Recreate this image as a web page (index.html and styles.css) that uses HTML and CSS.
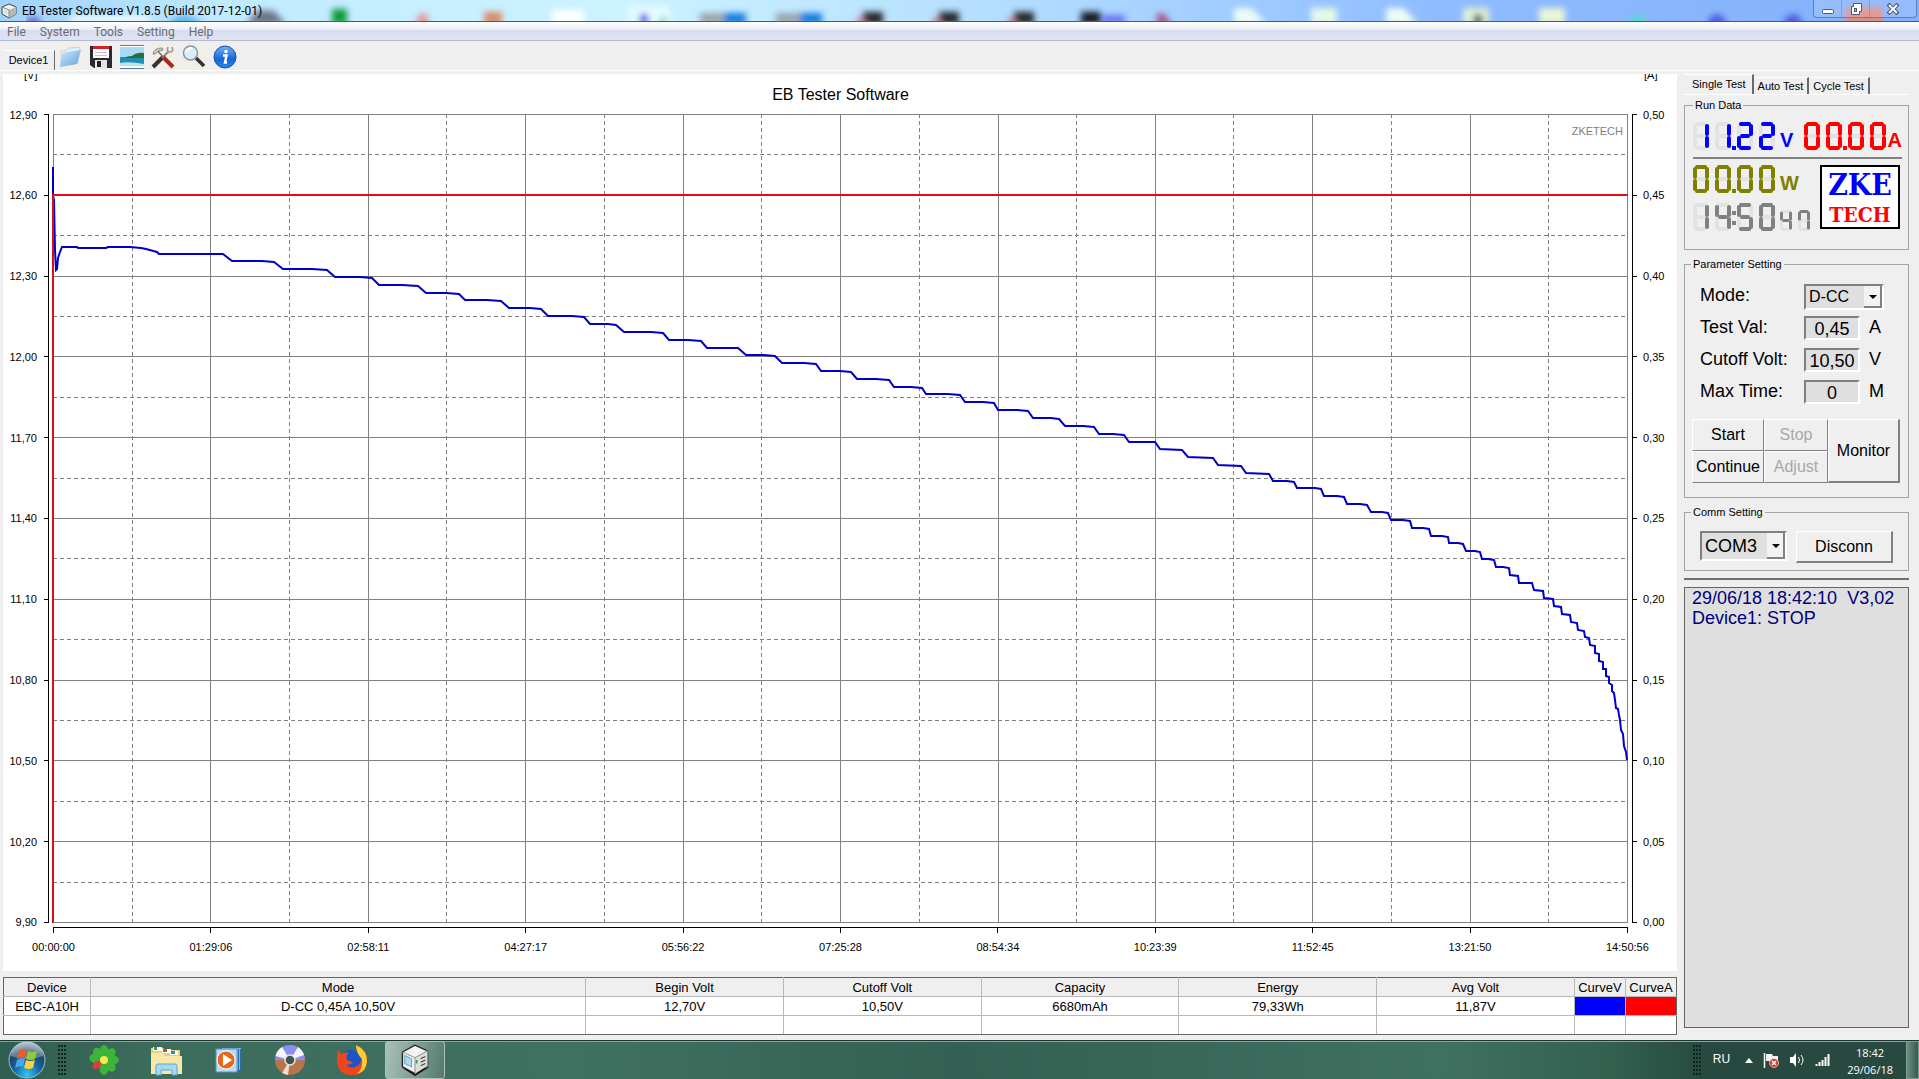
FILE: index.html
```html
<!DOCTYPE html>
<html lang="en">
<head>
<meta charset="utf-8">
<title>EB Tester Software V1.8.5 (Build 2017-12-01)</title>
<link rel="stylesheet" href="styles.css">
</head>
<body>
<svg class="defs" aria-hidden="true">
  <defs>
    <g id="seg-a"><line x1="4" y1="2" x2="12" y2="2"/></g>
    <g id="seg-b"><line x1="14" y1="4" x2="14" y2="12"/></g>
    <g id="seg-c"><line x1="14" y1="16" x2="14" y2="24"/></g>
    <g id="seg-d"><line x1="4" y1="26" x2="12" y2="26"/></g>
    <g id="seg-e"><line x1="2" y1="16" x2="2" y2="24"/></g>
    <g id="seg-f"><line x1="2" y1="4" x2="2" y2="12"/></g>
    <g id="seg-g"><line x1="5" y1="14" x2="11" y2="14"/></g>
    <g id="dim"><use href="#seg-a"/><use href="#seg-b"/><use href="#seg-c"/><use href="#seg-d"/><use href="#seg-e"/><use href="#seg-f"/><use href="#seg-g"/></g>
    <g id="n0"><use href="#seg-a"/><use href="#seg-b"/><use href="#seg-c"/><use href="#seg-d"/><use href="#seg-e"/><use href="#seg-f"/></g>
    <g id="n1"><use href="#seg-b"/><use href="#seg-c"/></g>
    <g id="n2"><use href="#seg-a"/><use href="#seg-b"/><use href="#seg-g"/><use href="#seg-e"/><use href="#seg-d"/></g>
    <g id="n4"><use href="#seg-f"/><use href="#seg-g"/><use href="#seg-b"/><use href="#seg-c"/></g>
    <g id="n5"><use href="#seg-a"/><use href="#seg-f"/><use href="#seg-g"/><use href="#seg-c"/><use href="#seg-d"/></g>
    <g id="n7"><use href="#seg-f"/><use href="#seg-a"/><use href="#seg-b"/><use href="#seg-c"/></g>
    <g id="box-icon">
      <path d="M2 7 L13 1 L24 6 L24 19 L13 26 L2 20 Z" fill="#f4f4f2" stroke="#222" stroke-width="1.2"/>
      <path d="M13 12 L24 6 V19 L13 26 Z" fill="#dcdcd8"/>
      <path d="M2 7 L13 12 L24 6 M13 12 V26" fill="none" stroke="#999"/>
      <path d="M4 10 L10 13 V20 L4 17 Z" fill="#a9dcf0" stroke="#7ab"/>
      <path d="M18 13 l4 -2 M18 16 l4 -2 M18 19 l4 -2" stroke="#444"/>
      <path d="M14.500 14 v3" stroke="#3aa03a" stroke-width="1.500"/>
    </g>
  </defs>
</svg>

<header class="titlebar">
  <svg class="glass" viewBox="0 0 1919 21" preserveAspectRatio="none" aria-hidden="true">
    <g filter="url(#soft)">
      <rect x="26" y="18" width="14" height="6" fill="#5a55c8"/>
      <rect x="70" y="16" width="80" height="8" fill="#f4fcff"/>
      <path d="M168 24 q12 -16 36 0z" fill="#4aa8ee"/>
      <path d="M246 24 L258 10 L274 11 L286 24z" fill="#6b7688"/>
      <rect x="332" y="9" width="15" height="15" fill="#0f9a3c"/>
      <path d="M414 24 l6 -10 h6 l4 10z" fill="#ec8b95"/>
      <rect x="484" y="12" width="18" height="12" fill="#d98a68"/>
      <rect x="552" y="10" width="32" height="14" fill="#fff"/>
      <rect x="628" y="6" width="42" height="18" fill="#e4fbff"/>
      <rect x="640" y="14" width="8" height="10" fill="#3e3edc"/><circle cx="663" cy="21" r="3" fill="#2cab6a"/>
      <rect x="700" y="13" width="24" height="11" fill="#9aa6ac"/><rect x="724" y="13" width="22" height="11" fill="#167ae0"/>
      <rect x="776" y="13" width="24" height="11" fill="#9aa6ac"/><rect x="800" y="13" width="22" height="11" fill="#167ae0"/>
      <rect x="863" y="12" width="20" height="12" fill="#22252b"/><rect x="857" y="18" width="8" height="6" fill="#c06c74"/>
      <rect x="939" y="12" width="20" height="12" fill="#22252b"/><rect x="933" y="18" width="8" height="6" fill="#c06c74"/>
      <rect x="1014" y="12" width="20" height="12" fill="#22252b"/><rect x="1008" y="18" width="8" height="6" fill="#c06c74"/>
      <rect x="1081" y="12" width="20" height="12" fill="#15171b"/><rect x="1103" y="15" width="22" height="9" fill="#6b74ee"/>
      <path d="M1156 24 l2 -11 l6 1 l8 10z" fill="#a5507a"/>
      <path d="M1234 24 V8 h18 l14 16z" fill="#eafcf4"/>
      <path d="M1311 24 V8 h26 v16z" fill="#e6f8e6"/>
      <path d="M1386 24 V8 h18 l14 16z" fill="#effcf2"/>
      <path d="M1463 24 V8 h26 v16z" fill="#e2f2d6"/><circle cx="1478" cy="19" r="5" fill="#4d5238"/>
      <path d="M1539 24 V8 h26 v16z" fill="#eaf6d6"/>
      <circle cx="1638" cy="22" r="8" fill="#62d2d4"/>
      <circle cx="1717" cy="23" r="9" fill="#4f5fe0"/><circle cx="1793" cy="23" r="9" fill="#4f5fe0"/>
      <rect x="1846" y="8" width="38" height="16" fill="#e08a80"/>
    </g>
    <defs><filter id="soft" x="0" y="-1" width="1" height="3"><feGaussianBlur stdDeviation="3"/></filter></defs>
  </svg>
  <svg class="app-icon" viewBox="0 0 16 16" aria-hidden="true">
    <path d="M1 4 L8 1 L15 4 V11 L8 15 L1 11z" fill="#f2f2ee" stroke="#444"/><path d="M8 7 L15 4 V11 L8 15z" fill="#b9b9b2"/><path d="M1 4 L8 7 V15" fill="none" stroke="#888"/><path d="M3 6.500 l3 1.500 v4 l-3 -1.500z" fill="#c8e2ea"/>
  </svg>
  <h1 class="title">EB Tester Software V1.8.5 (Build 2017-12-01)</h1>
  <div class="window-buttons">
    <button type="button" aria-label="Minimize"><svg width="14" height="12" viewBox="0 0 14 12"><rect x="1.500" y="6.500" width="11" height="4" rx="1" fill="#fff" stroke="#4c5870"/></svg></button>
    <button type="button" aria-label="Restore"><svg width="14" height="12" viewBox="0 0 14 12"><path d="M4.500 .500 h8 v8 h-2 v3 h-8 v-8 h2z" fill="#fff" stroke="#4c5870"/><rect x="5.500" y="5.500" width="2" height="3" fill="#9fb4dc" stroke="#4c5870"/></svg></button>
    <button type="button" class="close" aria-label="Close"><svg width="14" height="12" viewBox="0 0 14 12"><path d="M2 1 L12 11 M12 1 L2 11" stroke="#4c5870" stroke-width="4"/><path d="M3 2 L11 10 M11 2 L3 10" stroke="#fff" stroke-width="2"/></svg></button>
  </div>
</header>

<nav class="menubar">
  <button type="button">File</button><button type="button">System</button><button type="button">Tools</button><button type="button">Setting</button><button type="button">Help</button>
</nav>

<div class="toolbar">
  <button type="button" class="device-tab">Device1</button>
  <div class="tools">
    <button type="button" aria-label="Open"><svg viewBox="0 0 24 24"><rect width="24" height="24" fill="#f3efe4"/><path d="M3 6 L9 5 L11 3 L22 2 L20 18 L3 21z" fill="#dfeefa" stroke="#a8c6de" stroke-width=".6"/><path d="M4 8 L23 5 L19 19 L2 22z" fill="url(#fold)"/><defs><linearGradient id="fold" x2="1" y2="1"><stop stop-color="#cfe7fb"/><stop offset="1" stop-color="#5fa3d8"/></linearGradient></defs></svg></button>
    <button type="button" aria-label="Save"><svg viewBox="0 0 24 24"><path d="M1 1 H23 V23 H5 L1 20z" fill="#2c2a30"/><rect x="4" y="1" width="16" height="12" fill="#fff"/><rect x="4" y="1" width="16" height="3" fill="#dd1c2a"/><path d="M6 7.500 h12 M6 10.500 h12" stroke="#c4c4c8"/><rect x="6" y="15" width="12" height="8" fill="#e4e4e6"/><rect x="8" y="16" width="4" height="6" fill="#222"/></svg></button>
    <button type="button" aria-label="Picture"><svg viewBox="0 0 24 24"><rect width="24" height="24" fill="#fff"/><rect y="2" width="24" height="10" fill="#a9dcf2"/><rect y="12" width="24" height="7" fill="#218fb5"/><path d="M6 12 q3 -1 6 -1 q5 -4 12 -3 v5 H6z" fill="#2c6b3a"/><path d="M0 18 q8 -2 24 1 v2 H0z" fill="#bfe2e4"/><path d="M0 .500 h24 M0 23.500 h24" stroke="#5577a0"/></svg></button>
    <button type="button" aria-label="Tools"><svg viewBox="0 0 24 24"><rect width="24" height="24" fill="#f3efe4"/><path d="M2 22 L12 12" stroke="#3a3030" stroke-width="4"/><path d="M11 13 L18 6" stroke="#8b8b8b" stroke-width="2"/><path d="M21 2 q2 5 -2 5 q-4 0 -2 -5" fill="none" stroke="#999" stroke-width="1.600"/><path d="M12 12 L22 22" stroke="#a32a20" stroke-width="4"/><path d="M13 13 L6 5" stroke="#777" stroke-width="1.600"/><path d="M2 9 q1 -6 9 -6 l1 2 q-5 0 -8 4z" fill="#ccc" stroke="#666" stroke-width=".7"/></svg></button>
    <button type="button" aria-label="Search"><svg viewBox="0 0 24 24"><rect width="24" height="24" fill="#f3efe4"/><path d="M14 13 L22 21" stroke="#333" stroke-width="3.500"/><circle cx="8.500" cy="8" r="7" fill="#dcedf8" stroke="#8797a8" stroke-width="1.500"/><path d="M4 7 q2 -4 6 -4" stroke="#fff" stroke-width="2" fill="none"/></svg></button>
    <button type="button" aria-label="About"><svg viewBox="0 0 24 24"><circle cx="12" cy="12" r="11" fill="url(#info)" stroke="#1650a8"/><defs><linearGradient id="info" x2="0" y2="1"><stop stop-color="#6db1f8"/><stop offset=".6" stop-color="#1667d8"/><stop offset="1" stop-color="#2f86ee"/></linearGradient></defs><circle cx="13" cy="6.500" r="1.800" fill="#fff"/><path d="M10 10.500 h3.500 l-1.500 7 h2" fill="none" stroke="#fff" stroke-width="2.400"/></svg></button>
  </div>
</div>

<main class="workspace">
  <section class="results">
    <div class="chart">
      <span class="unit unit-v">[V]</span>
      <h2 class="chart-title">EB Tester Software</h2>
      <span class="unit unit-a">[A]</span>
      <ul class="axis axis-v"><li>12,90</li><li>12,60</li><li>12,30</li><li>12,00</li><li>11,70</li><li>11,40</li><li>11,10</li><li>10,80</li><li>10,50</li><li>10,20</li><li>9,90</li></ul>
      <div class="plot">
        <svg viewBox="53 114 1575 809" preserveAspectRatio="none" role="img" aria-label="Voltage and current over time">
          <g class="minor">
            <path d="M53 154.500H1628M53 235.500H1628M53 316.500H1628M53 397.500H1628M53 478.500H1628M53 558.500H1628M53 639.500H1628M53 720.500H1628M53 801.500H1628M53 882.500H1628"/>
            <path d="M132.500 114V923M289.500 114V923M446.500 114V923M604.500 114V923M761.500 114V923M919.500 114V923M1076.500 114V923M1233.500 114V923M1391.500 114V923M1548.500 114V923"/>
          </g>
          <g class="major">
            <path d="M53 114.500H1628M53 195.500H1628M53 276.500H1628M53 356.500H1628M53 437.500H1628M53 518.500H1628M53 599.500H1628M53 680.500H1628M53 760.500H1628M53 841.500H1628M53 922.500H1628"/>
            <path d="M53.500 114V923M210.500 114V923M368.500 114V923M525.500 114V923M683.500 114V923M840.500 114V923M998.500 114V923M1155.500 114V923M1312.500 114V923M1470.500 114V923M1627.500 114V923"/>
          </g>
          <polyline class="volt" points="53,167 53,195 54,200 55,250 56,270 57,269 58,258 60,252 62,247 77,247 78,248 106,248 108,247 130,247 141,248 146,249 157,252 159,254 223,254 232,261 262,261 274,262 283,269 312,269 327,270 335,277 360,277 372,278 379,285 402,285 418,286 426,293 446,293 459,294 465,300 487,300 501,301 509,308 530,308 541,309 548,316 572,316 584,317 590,324 608,324 616,325 624,332 651,332 663,333 669,340 688,340 701,341 707,348 738,348 746,355 764,355 775,356 782,363 804,363 816,364 821,371 840,371 851,372 857,379 876,379 889,380 894,387 911,387 922,388 926,394 948,394 960,395 965,402 983,402 994,403 998,410 1017,410 1028,411 1033,418 1051,418 1059,419 1065,426 1083,426 1094,427 1099,434 1113,434 1124,435 1129,442 1155,442 1160,449 1182,450 1188,457 1213,458 1218,465 1241,466 1246,473 1269,474 1273,481 1287,481 1294,482 1297,488 1315,488 1321,489 1324,496 1337,496 1344,497 1347,504 1360,504 1367,505 1371,512 1382,512 1388,513 1391,520 1403,520 1410,521 1412,528 1423,528 1429,529 1431,536 1442,536 1448,537 1449,543 1458,543 1463,544 1466,551 1475,551 1480,552 1482,559 1488,559 1494,560 1496,567 1503,567 1509,568 1510,575 1518,576 1519,583 1532,583 1534,590 1543,591 1544,598 1553,599 1554,606 1561,607 1562,614 1570,615 1571,622 1577,623 1578,630 1584,631 1585,637 1589,638 1590,645 1595,646 1595,653 1599,654 1599,661 1603,662 1603,669 1606,669 1606,676 1609,677 1609,683 1612,685 1612,691 1614,693 1615,700 1616,708 1618,709 1619,715 1620,720 1621,730 1623,734 1624,746 1626,752 1627,760"/>
          <path class="amp" d="M53 923V195H1628"/>
        </svg>
        <span class="watermark">ZKETECH</span>
      </div>
      <ul class="axis axis-a"><li>0,50</li><li>0,45</li><li>0,40</li><li>0,35</li><li>0,30</li><li>0,25</li><li>0,20</li><li>0,15</li><li>0,10</li><li>0,05</li><li>0,00</li></ul>
      <ul class="axis axis-t"><li>00:00:00</li><li>01:29:06</li><li>02:58:11</li><li>04:27:17</li><li>05:56:22</li><li>07:25:28</li><li>08:54:34</li><li>10:23:39</li><li>11:52:45</li><li>13:21:50</li><li>14:50:56</li></ul>
    </div>

    <table class="summary">
      <colgroup><col class="c-device"><col class="c-mode"><col class="c-val"><col class="c-val"><col class="c-val"><col class="c-val"><col class="c-val"><col class="c-curve"><col class="c-curve"></colgroup>
      <thead><tr><th>Device</th><th>Mode</th><th>Begin Volt</th><th>Cutoff Volt</th><th>Capacity</th><th>Energy</th><th>Avg Volt</th><th>CurveV</th><th>CurveA</th></tr></thead>
      <tbody>
        <tr><td>EBC-A10H</td><td>D-CC 0,45A 10,50V</td><td>12,70V</td><td>10,50V</td><td>6680mAh</td><td>79,33Wh</td><td>11,87V</td><td class="key-v"></td><td class="key-a"></td></tr>
        <tr><td></td><td></td><td></td><td></td><td></td><td></td><td></td><td></td><td></td></tr>
      </tbody>
    </table>
  </section>

  <aside class="panel">
    <div class="tabs">
      <button type="button" class="tab active">Single Test</button><button type="button" class="tab">Auto Test</button><button type="button" class="tab">Cycle Test</button>
    </div>

    <fieldset class="run">
      <legend>Run Data</legend>
      <div class="readouts top">
        <div class="readout volts">
          <svg width="84" height="28" role="img" aria-label="11.22"><g class="off"><use href="#dim"/><use href="#dim" x="22"/><use href="#dim" x="44"/><use href="#dim" x="66"/></g><g class="on"><use href="#n1"/><use href="#n1" x="22"/><use href="#n2" x="44"/><use href="#n2" x="66"/></g><rect class="dot" x="39" y="24" width="4" height="4"/></svg><span>V</span>
        </div>
        <div class="readout amps">
          <svg width="84" height="28" role="img" aria-label="00.00"><g class="off"><use href="#dim"/><use href="#dim" x="22"/><use href="#dim" x="44"/><use href="#dim" x="66"/></g><g class="on"><use href="#n0"/><use href="#n0" x="22"/><use href="#n0" x="44"/><use href="#n0" x="66"/></g><rect class="dot" x="39" y="24" width="4" height="4"/></svg><span>A</span>
        </div>
      </div>
      <hr>
      <div class="readouts">
        <div class="stack">
          <div class="readout watts">
            <svg width="84" height="28" role="img" aria-label="00.00"><g class="off"><use href="#dim"/><use href="#dim" x="22"/><use href="#dim" x="44"/><use href="#dim" x="66"/></g><g class="on"><use href="#n0"/><use href="#n0" x="22"/><use href="#n0" x="44"/><use href="#n0" x="66"/></g><rect class="dot" x="39" y="24" width="4" height="4"/></svg><span>W</span>
          </div>
          <div class="readout clock">
            <svg width="120" height="28" role="img" aria-label="14:50 47"><g class="off"><use href="#dim"/><use href="#dim" x="22"/><use href="#dim" x="44"/><use href="#dim" x="66"/></g><g class="on"><use href="#n1"/><use href="#n4" x="22"/><use href="#n5" x="44"/><use href="#n0" x="66"/></g><rect class="dot" x="39" y="8" width="4" height="4"/><rect class="dot" x="39" y="18" width="4" height="4"/>
              <g transform="translate(87 7) scale(.75)"><g class="off"><use href="#dim"/><use href="#dim" x="24"/></g><g class="on"><use href="#n4"/><use href="#n7" x="24"/></g></g></svg>
          </div>
        </div>
        <div class="logo"><b class="logo-top">ZKE</b><b class="logo-bottom">TECH</b></div>
      </div>
    </fieldset>

    <fieldset class="params">
      <legend>Parameter Setting</legend>
      <div class="fields">
        <label for="mode">Mode:</label>
        <span class="combo combo-mode"><select id="mode"><option>D-CC</option></select></span>
        <label for="testval">Test Val:</label><input id="testval" type="text" value="0,45"><span>A</span>
        <label for="cutoff">Cutoff Volt:</label><input id="cutoff" type="text" value="10,50"><span>V</span>
        <label for="maxtime">Max Time:</label><input id="maxtime" type="text" value="0"><span>M</span>
      </div>
      <div class="actions">
        <button type="button">Start</button><button type="button" disabled>Stop</button><button type="button" class="monitor">Monitor</button>
        <button type="button">Continue</button><button type="button" disabled>Adjust</button>
      </div>
    </fieldset>

    <fieldset class="comm">
      <legend>Comm Setting</legend>
      <div class="comm-row">
        <span class="combo combo-port"><select id="port" aria-label="Port"><option>COM3</option></select></span>
        <button type="button">Disconn</button>
      </div>
    </fieldset>
    <hr class="split">
    <div class="log" role="log"><p>29/06/18 18:42:10&nbsp; V3,02</p><p>Device1: STOP</p></div>
  </aside>
</main>

<footer class="taskbar">
  <button type="button" class="orb" aria-label="Start"><svg width="38" height="38" viewBox="0 0 38 38"><defs><radialGradient id="orb" cx=".5" cy=".9" r=".9"><stop stop-color="#35c8f4"/><stop offset=".4" stop-color="#1268a8"/><stop offset=".7" stop-color="#1c4566"/><stop offset="1" stop-color="#9fb8c4"/></radialGradient></defs><circle cx="19" cy="19" r="18" fill="url(#orb)" stroke="#9cc0c8"/><path d="M3 15 a16 14 0 0 1 32 0 q-16 6 -32 0z" fill="#fff" opacity=".3"/><path d="M11 10 q4 -3 8 -1 l-2 8 q-4 -2 -8 1z" fill="#ee5a2c"/><path d="M20 10 q4 2 9 0 l-2 8 q-4 2 -9 0z" fill="#8fcb3c"/><path d="M9 19 q4 -3 8 -1 l-2 8 q-4 -2 -8 1z" fill="#4aa5ea"/><path d="M18 19 q4 2 9 0 l-2 8 q-4 2 -9 0z" fill="#fcd03a"/></svg></button>
  <span class="grip"></span>
  <div class="apps">
    <button type="button" aria-label="Messenger"><svg width="32" height="32" viewBox="0 0 32 32"><g fill="#3cb43a"><ellipse cx="16" cy="7.500" rx="4.600" ry="6.500"/><ellipse cx="16" cy="7.500" rx="4.600" ry="6.500" transform="rotate(45 16 16)"/><ellipse cx="16" cy="7.500" rx="4.600" ry="6.500" transform="rotate(90 16 16)"/><ellipse cx="16" cy="7.500" rx="4.600" ry="6.500" transform="rotate(135 16 16)"/><ellipse cx="16" cy="7.500" rx="4.600" ry="6.500" transform="rotate(180 16 16)"/><ellipse cx="16" cy="7.500" rx="4.600" ry="6.500" transform="rotate(280 16 16)"/><ellipse cx="16" cy="7.500" rx="4.600" ry="6.500" transform="rotate(320 16 16)"/></g><ellipse cx="16" cy="7.500" rx="3.500" ry="5" fill="#e03c3c" transform="rotate(235 16 16)"/><circle cx="16" cy="16" r="4" fill="#f8e84a"/></svg></button>
    <button type="button" aria-label="Explorer"><svg width="32" height="32" viewBox="0 0 32 32"><path d="M1 4 h12 l2 2 h15 v24 H1z" fill="#e8cf7c"/><rect x="3" y="3" width="9" height="4" fill="#fff"/><rect x="4" y="3" width="3" height="3" fill="#2fa043"/><rect x="12" y="5" width="9" height="4" fill="#fff"/><rect x="13" y="5" width="4" height="3" fill="#d6443a"/><rect x="20" y="7" width="8" height="4" fill="#fff"/><rect x="21" y="7" width="4" height="3" fill="#2f86c9"/><path d="M1 9 h11 l3 3 h17 v18 H1z" fill="#f8e8a8"/><path d="M6 31 v-9 q0 -2 2 -2 h17 q2 0 2 2 v9 h-5 v-5 h-11 v5z" fill="#a6d8f2" stroke="#5ea5cf"/></svg></button>
    <button type="button" aria-label="Media Player"><svg width="32" height="32" viewBox="0 0 32 32"><rect x="10" y="4" width="19" height="22" fill="#79b6e0"/><path d="M26.500 5 v22 M28.500 5 v22" stroke="#2c6fa8"/><rect x="4" y="5" width="21" height="23" fill="#b6dbf2" stroke="#5794c2"/><circle cx="14" cy="16" r="9" fill="#e8671c" stroke="#fff"/><path d="M11 10 L20 16 L11 22z" fill="#fff"/></svg></button>
    <button type="button" aria-label="Disc"><svg width="32" height="32" viewBox="0 0 32 32"><circle cx="16" cy="16" r="15" fill="#b8754c"/><path d="M1 16 a15 15 0 0 1 30 0z" fill="#8d8df0"/><path d="M16 16 L1.500 12 A15 15 0 0 1 8 3z M16 16 L24 3 A15 15 0 0 1 30 11z" fill="#f6f6fc"/><path d="M16 16 L8 29 A15 15 0 0 0 14 31z" fill="#f0dccb"/><circle cx="16" cy="16" r="5" fill="#39574d" stroke="#e6e6e6" stroke-width="1.500"/></svg></button>
    <button type="button" aria-label="Firefox"><svg width="32" height="32" viewBox="0 0 32 32"><circle cx="16" cy="17" r="11" fill="#1c56c4"/><path d="M2 6 q1 3 4 4 q3 -2 7 -1 q-4 3 -2 7 q4 1 6 3 q-4 3 -7 1 q3 5 9 3 q8 -3 6 -12 q-4 -4 -5 -10 q11 5 11 16 q-1 14 -15 14 q-14 0 -15 -14 q0 -6 1 -11z" fill="#f0461e"/><path d="M20 1 q11 5 11 16 q-1 11 -10 13 q6 -5 5 -15 q-6 -6 -6 -14z" fill="#ffcb2e"/></svg></button>
    <button type="button" class="running" aria-label="EB Tester"><svg width="34" height="32" viewBox="-1 0 28 28"><path d="M2 21 L13 28 L26 20 L13 24z" fill="#111"/><use href="#box-icon"/></svg></button>
  </div>
  <div class="tray">
    <span class="grip"></span>
    <span class="lang">RU</span>
    <svg width="8" height="5" viewBox="0 0 8 5"><path d="M0 5 L4 0 L8 5z" fill="#fff"/></svg>
    <svg width="16" height="16" viewBox="0 0 16 16"><path d="M1.500 1 v15" stroke="#fff" stroke-width="1.500"/><path d="M3 2 h6 l1 2 h5 v6 h-5 l-2 -1 H3z" fill="#eef3f0"/><circle cx="11" cy="11" r="4.500" fill="#d8322c" stroke="#fff" stroke-width=".6"/><path d="M9 9 l4 4 M13 9 l-4 4" stroke="#fff" stroke-width="1.500"/></svg>
    <svg width="16" height="14" viewBox="0 0 16 14"><path d="M1 4 h3 l3 -4 v14 l-3 -4 h-3z" fill="#fff"/><path d="M9.500 4 q2 3 0 6 M12 2 q4 5 0 10" fill="none" stroke="#fff"/></svg>
    <svg width="16" height="12" viewBox="0 0 16 12"><path d="M1.500 12 v-2 M4.500 12 v-4 M7.500 12 v-6 M10.500 12 v-9 M13.500 12 v-12" stroke="#fff" stroke-width="2"/></svg>
    <time class="datetime"><span>18:42</span><span>29/06/18</span></time>
    <button type="button" class="show-desktop" aria-label="Show desktop"></button>
  </div>
</footer>
</body>
</html>
```
FILE: styles.css
```css
* { box-sizing: border-box; }
body {
  margin: 0;
  min-height: 100vh;
  display: flex;
  flex-direction: column;
  background: #efefef;
  color: #000;
  font: 11px/14px "Liberation Sans", Arial, sans-serif;
}
button, input, select { font: inherit; color: inherit; margin: 0; }
button { padding: 0; border: 0; background: none; }
h1, h2, p, ul { margin: 0; padding: 0; }
ul { list-style: none; }
.defs { position: absolute; width: 0; height: 0; }

/* window frame */
.titlebar {
  position: relative;
  display: flex;
  align-items: center;
  height: 22px;
  padding-left: 1px;
  border-bottom: 1px solid #44597c;
  background: linear-gradient(90deg, #9fd2fa, #c0ebff 12%, #cdf3ff 32%, #b4deff 52%, #8fbcff 75%, #82b0fb);
}
.glass { position: absolute; inset: 0; width: 100%; height: 100%; }
.app-icon { position: relative; width: 16px; height: 16px; }
.title {
  position: relative;
  margin-left: 5px;
  flex: 1;
  font: 12px/20px Roboto, sans-serif;
}
.window-buttons {
  position: relative;
  align-self: stretch;
  display: flex;
  height: 18px;
  margin-right: 2px;
  border: 1px solid #5f7fb4;
  border-top: 0;
  border-radius: 0 0 4px 4px;
  background: rgba(255, 255, 255, .15);
}
.window-buttons button { width: 28px; border-right: 1px solid #7e9ccc; }
.window-buttons .close { width: 46px; border: 0; }
.window-buttons svg { display: block; margin: 0 auto; }

.menubar {
  display: flex;
  height: 19px;
  border-bottom: 1px solid #b4b8c8;
  background: linear-gradient(#fff, #eef0f6 40%, #d8def0 45%, #dde3f2);
}
.menubar button {
  padding: 0 7px;
  color: #6a6a70;
  font: 12px/20px Roboto, sans-serif;
}

.toolbar {
  display: flex;
  height: 33px;
  align-items: flex-start;
  padding: 4px 0 0 3px;
  border-bottom: 3px solid #efefef;
  box-shadow: inset 0 -1px #fff;
}
.device-tab {
  width: 52px;
  height: 20px;
  margin-top: 5px;
  padding-bottom: 2px;
  border-top: 1px solid #fff;
  border-right: 1px solid #696969;
}
.tools { display: flex; gap: 7px; margin-left: 3px; }
.tools button, .tools svg { display: block; width: 24px; height: 24px; }

/* layout */
.workspace {
  flex: 1;
  display: grid;
  grid-template-columns: minmax(0, 1fr) 242px;
}
.results { display: flex; flex-direction: column; padding: 0 0 5px 3px; }

/* chart */
.chart {
  flex: 1;
  display: grid;
  grid-template-columns: 50px minmax(0, 1fr) 49px;
  grid-template-rows: 40px minmax(400px, 1fr) 48px;
  background: #fff;
}
.chart-title { font: 16px/42px "Liberation Sans", Arial, sans-serif; text-align: center; }
.unit { overflow: hidden; line-height: 0; padding: 1px 0 0 21px; }
.unit-a { padding-left: 16px; }
.axis { display: flex; justify-content: space-between; }
.axis li { display: flex; align-items: center; }
.axis li::before, .axis li::after { background: #000; }
.axis-v { flex-direction: column; border-right: 1px solid #000; margin-right: 4px; }
.axis-v li { height: 1px; justify-content: flex-end; gap: 7px; }
.axis-v li::after { content: ""; width: 4px; height: 1px; }
.axis-a { flex-direction: column; border-left: 1px solid #000; margin-left: 4px; }
.axis-a li { height: 1px; gap: 6px; }
.axis-a li::before { content: ""; width: 4px; height: 1px; }
.axis-t { grid-column: 2; border-top: 1px solid #000; margin-top: 4px; }
.axis-t li { width: 1px; flex-direction: column; white-space: nowrap; gap: 7px; }
.axis-t li::before { content: ""; width: 1px; height: 5px; }
.plot { position: relative; min-height: 0; }
.plot svg { position: absolute; inset: 0; width: 100%; height: 100%; overflow: visible; }
.plot path, .plot polyline { fill: none; vector-effect: non-scaling-stroke; }
.plot path { shape-rendering: crispEdges; }
.minor { stroke: #808080; stroke-dasharray: 4 3; }
.major { stroke: #808080; }
.volt { stroke: #0000c8; stroke-width: 2; }
.amp { stroke: #dc1014; stroke-width: 2; }
.watermark { position: absolute; top: 10px; right: 5px; color: #808080; }

/* summary table */
.summary {
  width: 100%;
  margin-top: 6px;
  table-layout: fixed;
  border-collapse: collapse;
  border: 1px solid #646464;
  background: #fff;
  font-size: 13px;
  line-height: 16px;
  text-align: center;
}
.summary th, .summary td { height: 19px; padding: 2px 0 0; border: 1px solid #b8b8b8; }
.summary th { background: #efefef; font-weight: normal; }
.summary tr > :first-child { border-left-color: #646464; }
.summary tr > :last-child { border-right-color: #646464; }
.summary thead th { border-top-color: #646464; }
.summary tr:last-child td { border-bottom-color: #646464; }
.c-device { width: 5.2%; }
.c-mode { width: 29.6%; }
.c-val { width: 11.82%; }
.summary .key-v { background: #00f; }
.summary .key-a { background: #f00; }

/* side panel */
.panel {
  display: flex;
  flex-direction: column;
  padding: 0 10px 12px 7px;
}
.tabs { display: flex; align-items: flex-end; height: 21px; border-bottom: 1px solid #fff; }
.tab { height: 17px; padding: 0 4px; border-right: 2px solid #696969; border-top: 1px solid #fff; white-space: nowrap; }
.tab.active { height: 20px; padding: 0 6px 2px 8px; }
fieldset { min-width: 0; margin: 7px 0 0; padding: 0 6px; border: 1px solid #a4a4a4; }
legend { padding: 0 2px; line-height: 14px; }
.run { margin-top: 3px; padding: 10px 6px 18px 8px; }
.readouts { display: flex; justify-content: space-between; align-items: flex-start; }
.readout { display: flex; align-items: flex-end; height: 28px; }
.readout svg { display: block; }
.readout span { font: bold 20px/20px "Liberation Sans", Arial, sans-serif; }
.on, .off { stroke-width: 4; stroke-linecap: round; }
.on { stroke: currentColor; }
.off { stroke: #e2e2e2; }
.dot { fill: currentColor; }
.volts { color: #00f; }
.volts span { padding-left: 3px; }
.amps { color: #f00; }
.watts { color: #808000; }
.watts span { padding-left: 3px; }
.clock { color: #808080; }
.stack { display: grid; gap: 10px; }
.run hr { height: 2px; margin: 7px 0 6px; border: 0; background: #808080; }
.logo {
  display: flex;
  flex-direction: column;
  align-items: center;
  width: 80px;
  height: 64px;
  margin-right: 2px;
  border: 2px solid #000;
  background: #fff;
  font-family: "DejaVu Serif Condensed", "DejaVu Serif", serif;
  font-stretch: condensed;
}
.logo-top { color: #00f; font-size: 30px; line-height: 35px; }
.logo-bottom { color: #f00; font-size: 21px; line-height: 25px; }

.params { padding-top: 13px; padding-bottom: 14px; }
.fields {
  display: grid;
  grid-template-columns: 104px 56px auto;
  grid-auto-rows: 24px;
  row-gap: 8px;
  padding-left: 9px;
  font-size: 18px;
  line-height: 22px;
}
.fields > span:not(.combo) { padding-left: 9px; }
.fields input {
  width: 56px;
  height: 24px;
  padding: 3px 0 0;
  text-align: center;
}
.fields input, .combo {
  border: 2px solid #fff;
  border-top-color: #808080;
  border-left-color: #808080;
  border-radius: 0;
  background: #dfdfdf;
}
.combo { position: relative; display: block; }
.combo select {
  appearance: none;
  width: 100%;
  height: 100%;
  padding: 0 0 0 3px;
  border: 0;
  border-radius: 0;
  background: transparent;
}
.combo::before {
  content: "";
  position: absolute;
  top: 0; right: 0; bottom: 0;
  width: 16px;
  border-right: 2px solid #808080;
  border-bottom: 2px solid #808080;
  background: #f2f2f2;
}
.combo::after {
  content: "";
  position: absolute;
  right: 5px; top: 50%;
  margin-top: -2px;
  border: 4px solid transparent;
  border-top-color: #000;
  border-bottom: 0;
}
.combo-mode { grid-column: span 2; width: 80px; height: 26px; font-size: 16px; }
.actions {
  display: grid;
  grid-template-columns: 72px 64px 72px;
  grid-auto-rows: 32px;
  margin: 15px 0 0 1px;
  font-size: 16px;
}
.actions button, .comm-row button {
  border: 1px solid #fff;
  border-right-color: #808080;
  border-bottom-color: #808080;
  white-space: nowrap;
}
.actions button:disabled { color: #a8a8a8; }
.actions .monitor { grid-column: 3; grid-row: 1 / span 2; border-right-width: 2px; border-bottom-width: 2px; }

.comm { padding: 12px 6px 7px; }
.comm-row { display: flex; gap: 9px; padding-left: 9px; font-size: 16px; }
.combo-port { width: 87px; height: 30px; font-size: 18px; }
.comm-row button { width: 97px; height: 32px; border-right-width: 2px; border-bottom-width: 2px; }
.split { width: 100%; height: 2px; margin: 7px 0; border: 0; background: #707070; }
.log {
  flex: 1;
  padding: 0 7px;
  border: 1px solid #646464;
  background: #dfdfdf;
  color: #000080;
  font-size: 18px;
  line-height: 20px;
  white-space: nowrap;
}

/* taskbar */
.taskbar {
  display: flex;
  align-items: center;
  height: 39px;
  border-top: 1px solid #1c3530;
  box-shadow: inset 0 1px #88a79d;
  background: linear-gradient(90deg, #2f5d4f, #3c6c5c 8%, #3f7161 30%, #336052 50%, #3f7161 75%, #33604f 84%, #27493f 89%, #27493f);
  color: #fff;
}
.orb { display: block; width: 38px; height: 38px; margin-left: 8px; }
.orb svg, .apps svg { display: block; margin: 0 auto; }
.grip {
  width: 8px;
  height: 30px;
  margin-left: 12px;
  background: radial-gradient(circle at 1px 1px, #12241f 1px, transparent 1px) 0 0 / 3px 4px;
}
.apps { display: flex; align-self: stretch; align-items: center; flex: 1; padding-left: 7px; }
.apps button { width: 62px; }
.apps .running {
  align-self: stretch;
  width: 60px;
  margin-left: 2px;
  border: 1px solid #a9c2ba;
  border-radius: 3px;
  background: linear-gradient(100deg, #a8c2b8, #7f9f93 50%, #55796c);
}
.tray { display: flex; align-self: stretch; align-items: center; }
.lang { margin: 0 15px 2px 12px; font-size: 12px; }
.tray svg { display: block; margin-right: 10px; }
.datetime {
  display: flex;
  flex-direction: column;
  align-items: center;
  margin: 0 13px 0 6px;
  padding-top: 2px;
  font: 11px/17px "Open Sans", sans-serif;
}
.show-desktop { align-self: stretch; width: 13px; border: 1px solid #7d9c92; background: linear-gradient(90deg, #6d8f85, #35594e); }
```
